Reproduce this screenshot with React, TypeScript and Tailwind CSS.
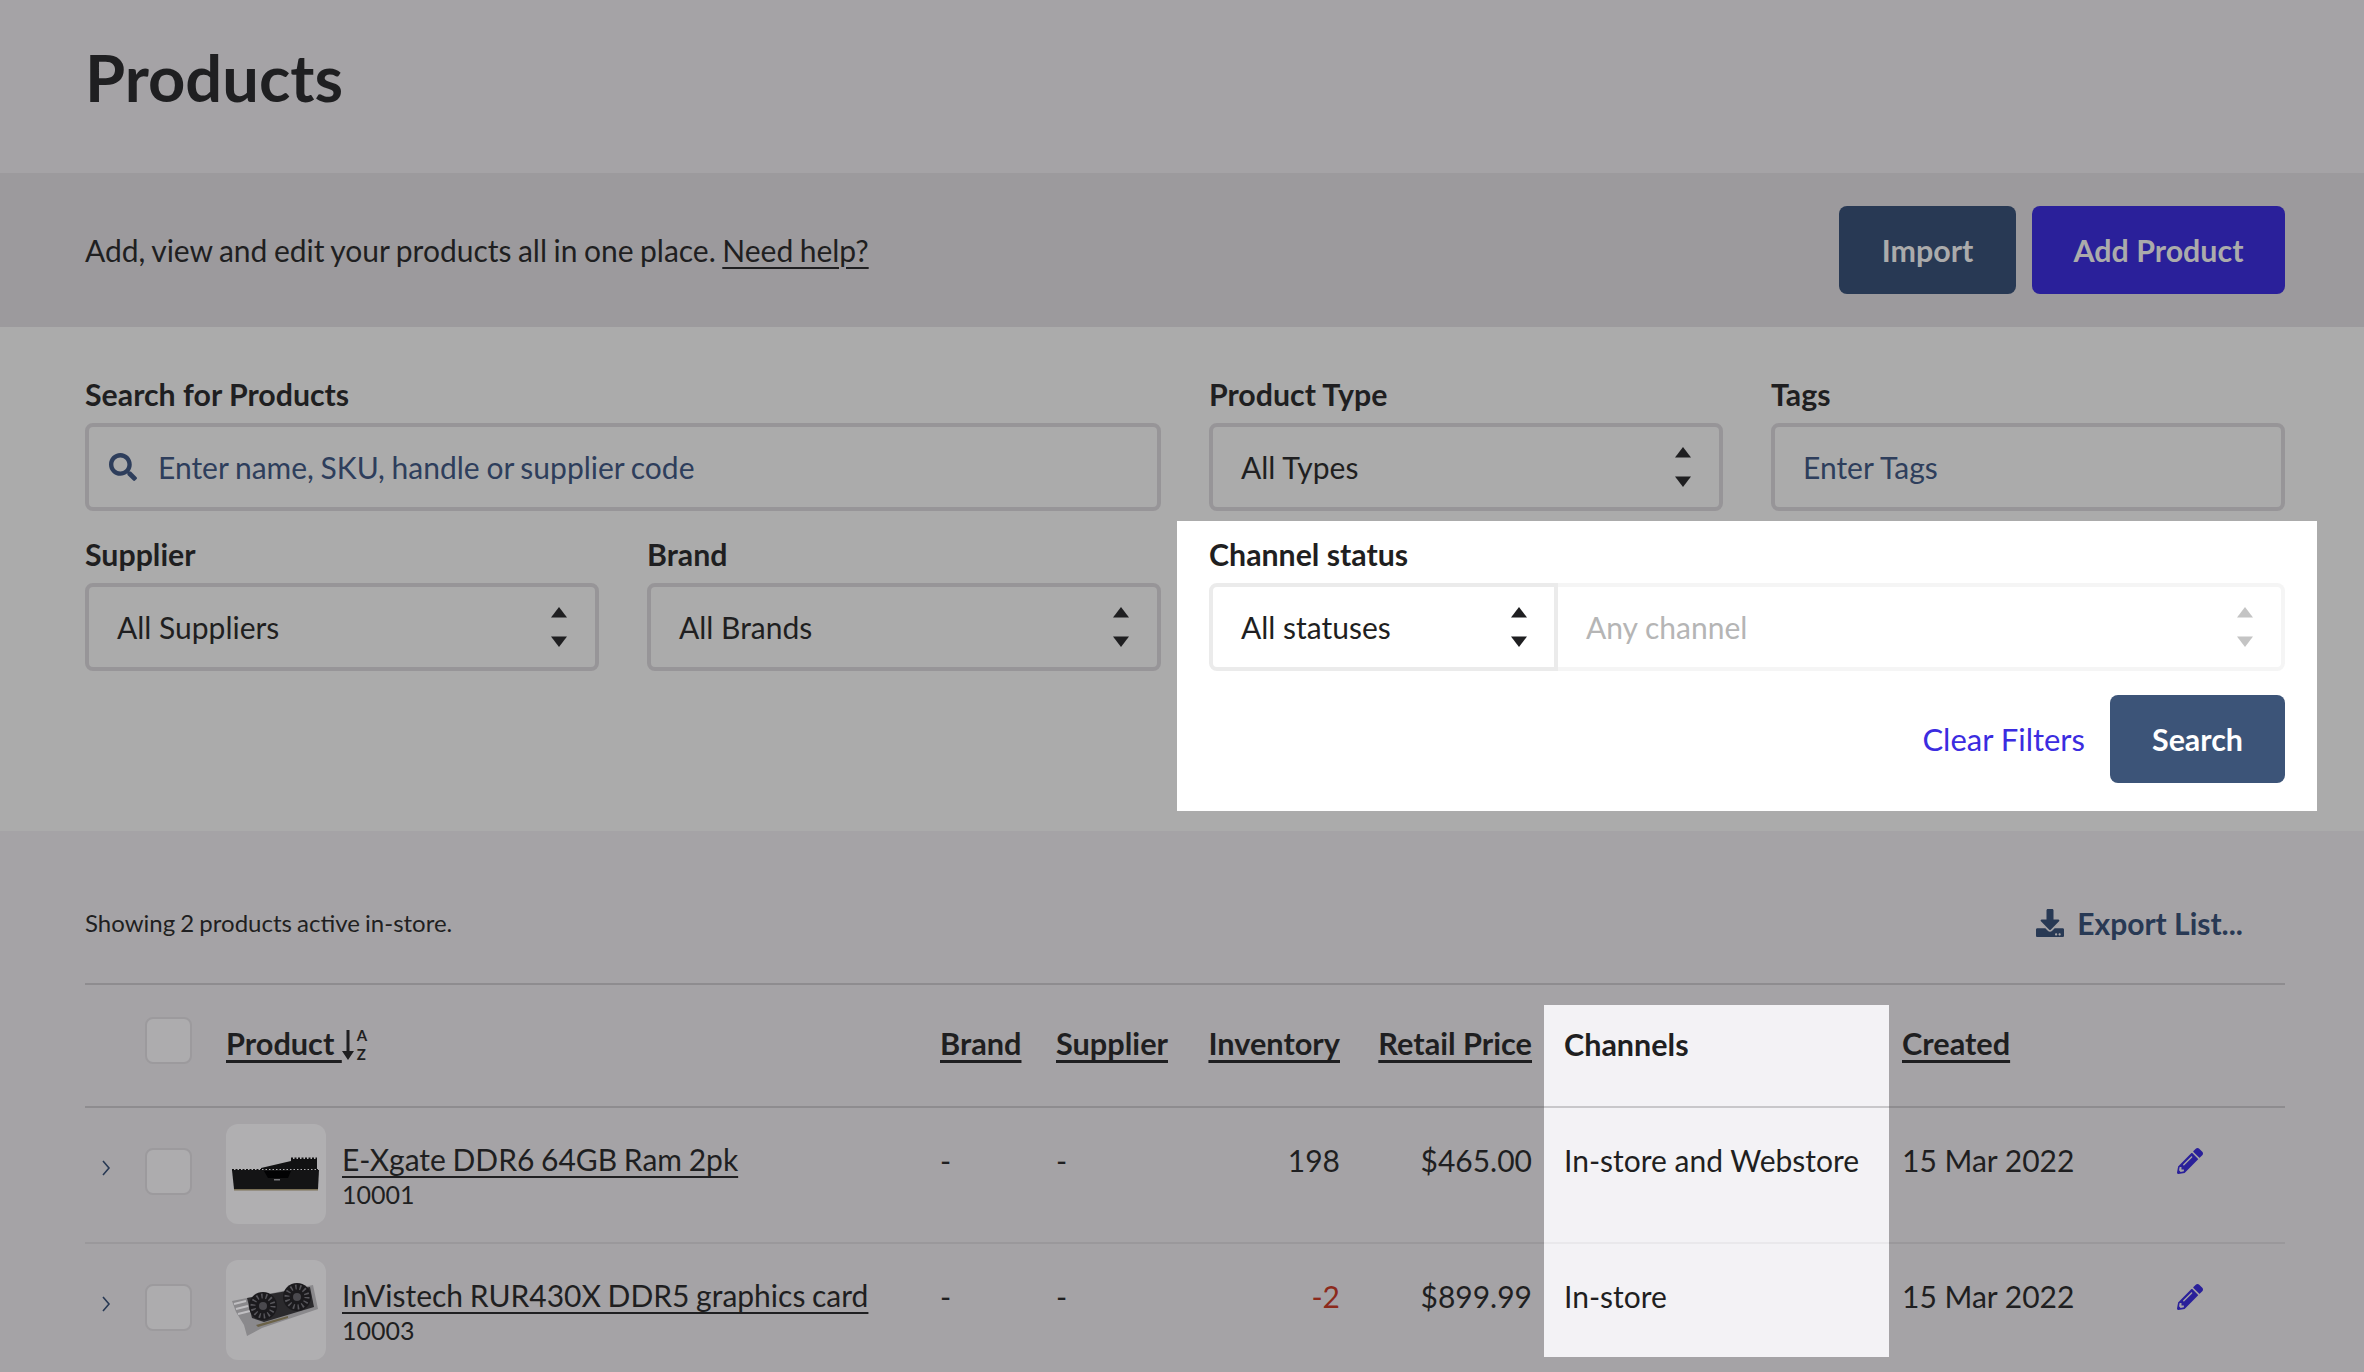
import { FaDownload, FaPencilAlt, FaSearch } from "react-icons/fa";

const rowGrid = "grid grid-cols-[60px_81px_714px_116px_140px_144px_204px_345px_288px_108px]";

const UpDown = ({ className }: { className: string }) => (
  <svg viewBox="0 0 16 40" className={`w-4 h-10 shrink-0 ${className}`} fill="currentColor">
    <path d="M8 0 L16 10.5 H0 Z" />
    <path d="M8 40 L16 29.5 H0 Z" />
  </svg>
);

const SelectBox = ({ label }: { label: string }) => (
  <div className="flex items-center justify-between h-[88px] border-4 border-[#979598] rounded-lg pl-7 pr-7 text-[30px] text-[#1f1f21]">
    <span>{label}</span>
    <UpDown className="text-[#1f1f21]" />
  </div>
);

const Label = ({ children }: { children: string }) => (
  <div className="h-9 mb-2.5 text-[30.3px] leading-[34px] font-bold text-[#1f1f21]">{children}</div>
);

const SortIcon = () => (
  <div className="flex gap-[3px] shrink-0">
    <svg viewBox="0 0 12 30" className="w-3 h-[30px] shrink-0" fill="#1f1f21">
      <path d="M4.5 0 H7.5 V21 H12 L6 30 L0 21 H4.5 Z" />
    </svg>
    <div className="flex flex-col -mt-1 text-[15px] leading-[19px] font-bold">
      <span>A</span>
      <span>Z</span>
    </div>
  </div>
);

const Chevron = () => (
  <svg viewBox="0 0 10 16" className="w-2.5 h-4" fill="none" stroke="#283954" strokeWidth="1.6">
    <path d="M2 1 L8 8 L2 15" />
  </svg>
);

const RamImage = () => (
  <svg viewBox="0 0 100 100" className="w-[100px] h-[100px]">
    <path d="M35 44 L65 37 L65 35 L91 35 L91 45 L35 45 Z" fill="#111112" />
    <path d="M65 34.5 H91" stroke="#111112" strokeWidth="2" strokeDasharray="2 1.5" />
    <path d="M6 46 H93" stroke="#111112" strokeWidth="2" strokeDasharray="2 1.5" />
    <path d="M6 46 H93 L92 65 H8 Z" fill="#141415" />
    <path d="M38 47 H65 L62 54 H42 Z" fill="#020203" />
    <path d="M8 65 H92 V66.5 H8 Z" fill="#7a7056" />
    <path d="M48 55 H54 V56.5 H48 Z" fill="#77767a" />
  </svg>
);

const GpuImage = () => (
  <svg viewBox="0 0 100 100" className="w-[100px] h-[100px]">
    <path d="M6 41 L87 25 L92 49 L36 68 L21 76 L18 65 L10 52 Z" fill="#8a898c" />
    <path d="M21 38 L84 27 L88 47 L38 62 L26 58 Z" fill="#2b2a2d" />
    <path d="M8 44 L20 41 M10 49 L22 46 M12 54 L24 51" stroke="#c0bfc2" strokeWidth="2" />
    <circle cx="37" cy="46" r="14" fill="#1b1a1d" />
    <circle cx="71" cy="37" r="14" fill="#1b1a1d" />
    <circle cx="37" cy="46" r="10" fill="none" stroke="#58575c" strokeWidth="5" strokeDasharray="1.5 3" />
    <circle cx="71" cy="37" r="10" fill="none" stroke="#58575c" strokeWidth="5" strokeDasharray="1.5 3" />
    <circle cx="37" cy="46" r="4" fill="#4a494e" />
    <circle cx="71" cy="37" r="4" fill="#4a494e" />
    <path d="M30 65 L62 56 L62 58 L32 67 Z" fill="#6b6248" />
  </svg>
);

const Checkbox = () => (
  <div className="w-[47px] h-[47px] bg-[#adacae] border-2 border-[#9c9a9d] rounded-lg" />
);

const HeadLink = ({ children }: { children: string }) => (
  <span className="underline decoration-[3px] underline-offset-[5px] font-bold text-[30.7px] text-[#1f1f21]">{children}</span>
);

const products = [
  { name: "E-Xgate DDR6 64GB Ram 2pk", sku: "10001", inventory: "198", price: "$465.00", channels: "In-store and Webstore", image: <RamImage /> },
  { name: "InVistech RUR430X DDR5 graphics card", sku: "10003", inventory: "-2", price: "$899.99", channels: "In-store", image: <GpuImage /> },
];

export default function App() {
  return (
    <div className="h-screen overflow-hidden bg-[#a5a3a6] [font-family:Lato,sans-serif] text-[#1f1f21]">
      {/* Title */}
      <div className="h-[173px] pl-[85px] pr-[79px] pt-[37px]">
        <h1 className="text-[65px] leading-[80px] font-bold">Products</h1>
      </div>

      {/* Intro band */}
      <div className="h-[154px] bg-[#9c9a9d] pl-[85px] pr-[79px] flex items-center justify-between">
        <p className="text-[30px] [word-spacing:-1.2px]">
          Add, view and edit your products all in one place.{" "}
          <a className="underline decoration-2 underline-offset-[5px]">Need help?</a>
        </p>
        <div className="flex gap-4">
          <button className="h-[88px] w-[177px] pt-0.5 rounded-lg bg-[#283954] text-[#ababab] text-[30.4px] font-bold">Import</button>
          <button className="h-[88px] w-[253px] pt-0.5 rounded-lg bg-[#2a209a] text-[#ababab] text-[30.4px] font-bold">Add Product</button>
        </div>
      </div>

      {/* Filters */}
      <div className="bg-[#ababab] pl-[85px] pr-[79px] pt-[50px] pb-[20px] grid grid-cols-4 gap-x-12 gap-y-[26px] items-start">
        <div className="col-span-2">
          <Label>Search for Products</Label>
          <div className="flex items-center h-[88px] border-4 border-[#979598] rounded-lg pl-5 text-[30px] text-[#2e3e5c]">
            <FaSearch className="w-7 h-7 mr-[21px]" />
            <span className="[word-spacing:-1px]">Enter name, SKU, handle or supplier code</span>
          </div>
        </div>
        <div>
          <Label>Product Type</Label>
          <SelectBox label="All Types" />
        </div>
        <div>
          <Label>Tags</Label>
          <div className="flex items-center h-[88px] border-4 border-[#979598] rounded-lg pl-7 text-[30px] text-[#2e3e5c]">Enter Tags</div>
        </div>
        <div>
          <Label>Supplier</Label>
          <SelectBox label="All Suppliers" />
        </div>
        <div>
          <Label>Brand</Label>
          <SelectBox label="All Brands" />
        </div>
        <div className="col-span-2 -mx-8 -mt-4 px-8 pt-4 pb-[28px] bg-white">
          <Label>Channel status</Label>
          <div className="flex h-[88px]">
            <div className="w-[349px] flex items-center justify-between border-4 border-[#ebebeb] rounded-l-lg pl-7 pr-[27px] text-[30px]">
              <span>All statuses</span>
              <UpDown className="text-[#1f1f21]" />
            </div>
            <div className="flex-1 flex items-center justify-between border-4 border-l-0 border-[#f5f5f5] rounded-r-lg pl-7 pr-7 text-[30px] text-[#b5b5b5]">
              <span>Any channel</span>
              <UpDown className="text-[#c4c4c4]" />
            </div>
          </div>
          <div className="flex items-center justify-end mt-6 gap-[25px]">
            <a className="text-[31px] text-[#3b2ce0]">Clear Filters</a>
            <button className="h-[88px] w-[175px] pt-0.5 rounded-lg bg-[#3c5478] text-white text-[30.4px] font-bold">Search</button>
          </div>
        </div>
      </div>

      {/* Product list */}
      <div className="pl-[85px] pr-[79px]">
        <div className="h-[154px] flex items-center justify-between border-b-2 border-[#8e8c8f] pt-[32px] pr-[42px]">
          <span className="text-[24px] [word-spacing:-1px]">Showing 2 products active in-store.</span>
          <span className="flex items-center gap-[13px] text-[30px] font-bold text-[#283954]">
            <FaDownload className="w-7 h-7" />
            Export List...
          </span>
        </div>

        <div className={`${rowGrid} h-[123px] border-b-2 border-[#8e8c8f]`}>
          <div />
          <div className="pt-[32px]"><Checkbox /></div>
          <div className="pt-9 flex items-start">
            <HeadLink>{"Product\u00a0"}</HeadLink>
            <div className="mt-[9px]"><SortIcon /></div>
          </div>
          <div className="pt-9"><HeadLink>Brand</HeadLink></div>
          <div className="pt-9"><HeadLink>Supplier</HeadLink></div>
          <div className="pt-9 text-right"><HeadLink>Inventory</HeadLink></div>
          <div className="pt-9 text-right pr-3"><HeadLink>Retail Price</HeadLink></div>
          <div className="mt-[20px] -mb-0.5 pt-[17px] pl-5 bg-[#f3f2f5] border-b-2 border-[#c8c7ca] text-[30.5px] font-bold">Channels</div>
          <div className="pt-9 pl-[13px]"><HeadLink>Created</HeadLink></div>
          <div />
        </div>

        {products.map((p, i) => (
          <div key={p.sku} className={`${rowGrid} h-[136px] border-b-2 border-[#9a989b] text-[30px]`}>
            <div className="pl-4 pt-[52px]">
              <Chevron />
            </div>
            <div className="pt-10"><Checkbox /></div>
            <div className="pt-4 flex gap-4">
              <div className="w-[100px] h-[100px] shrink-0 rounded-xl bg-[#b0afb1]">{p.image}</div>
              <div className="pt-[17px]">
                <a className="block leading-9 underline decoration-2 underline-offset-[5px] [word-spacing:-1px]">{p.name}</a>
                <div className="leading-[34px] text-[25px]">{p.sku}</div>
              </div>
            </div>
            <div className="pt-[30px]">-</div>
            <div className="pt-[30px]">-</div>
            <div className={`pt-[30px] text-right ${p.inventory.startsWith("-") ? "text-[#8c2a1c]" : ""}`}>{p.inventory}</div>
            <div className="pt-[30px] text-right pr-3">{p.price}</div>
            <div className={`pt-[30px] pl-5 bg-[#f3f2f5] -mb-0.5 border-b-2 ${i === 0 ? "border-[#e9e8eb]" : "border-transparent h-[113px]"}`}>{p.channels}</div>
            <div className="pt-[30px] pl-[13px]">15 Mar 2022</div>
            <div className="pt-[40px]">
              <FaPencilAlt className="w-[26px] h-[26px] text-[#2a209a]" />
            </div>
          </div>
        ))}
      </div>
    </div>
  );
}
